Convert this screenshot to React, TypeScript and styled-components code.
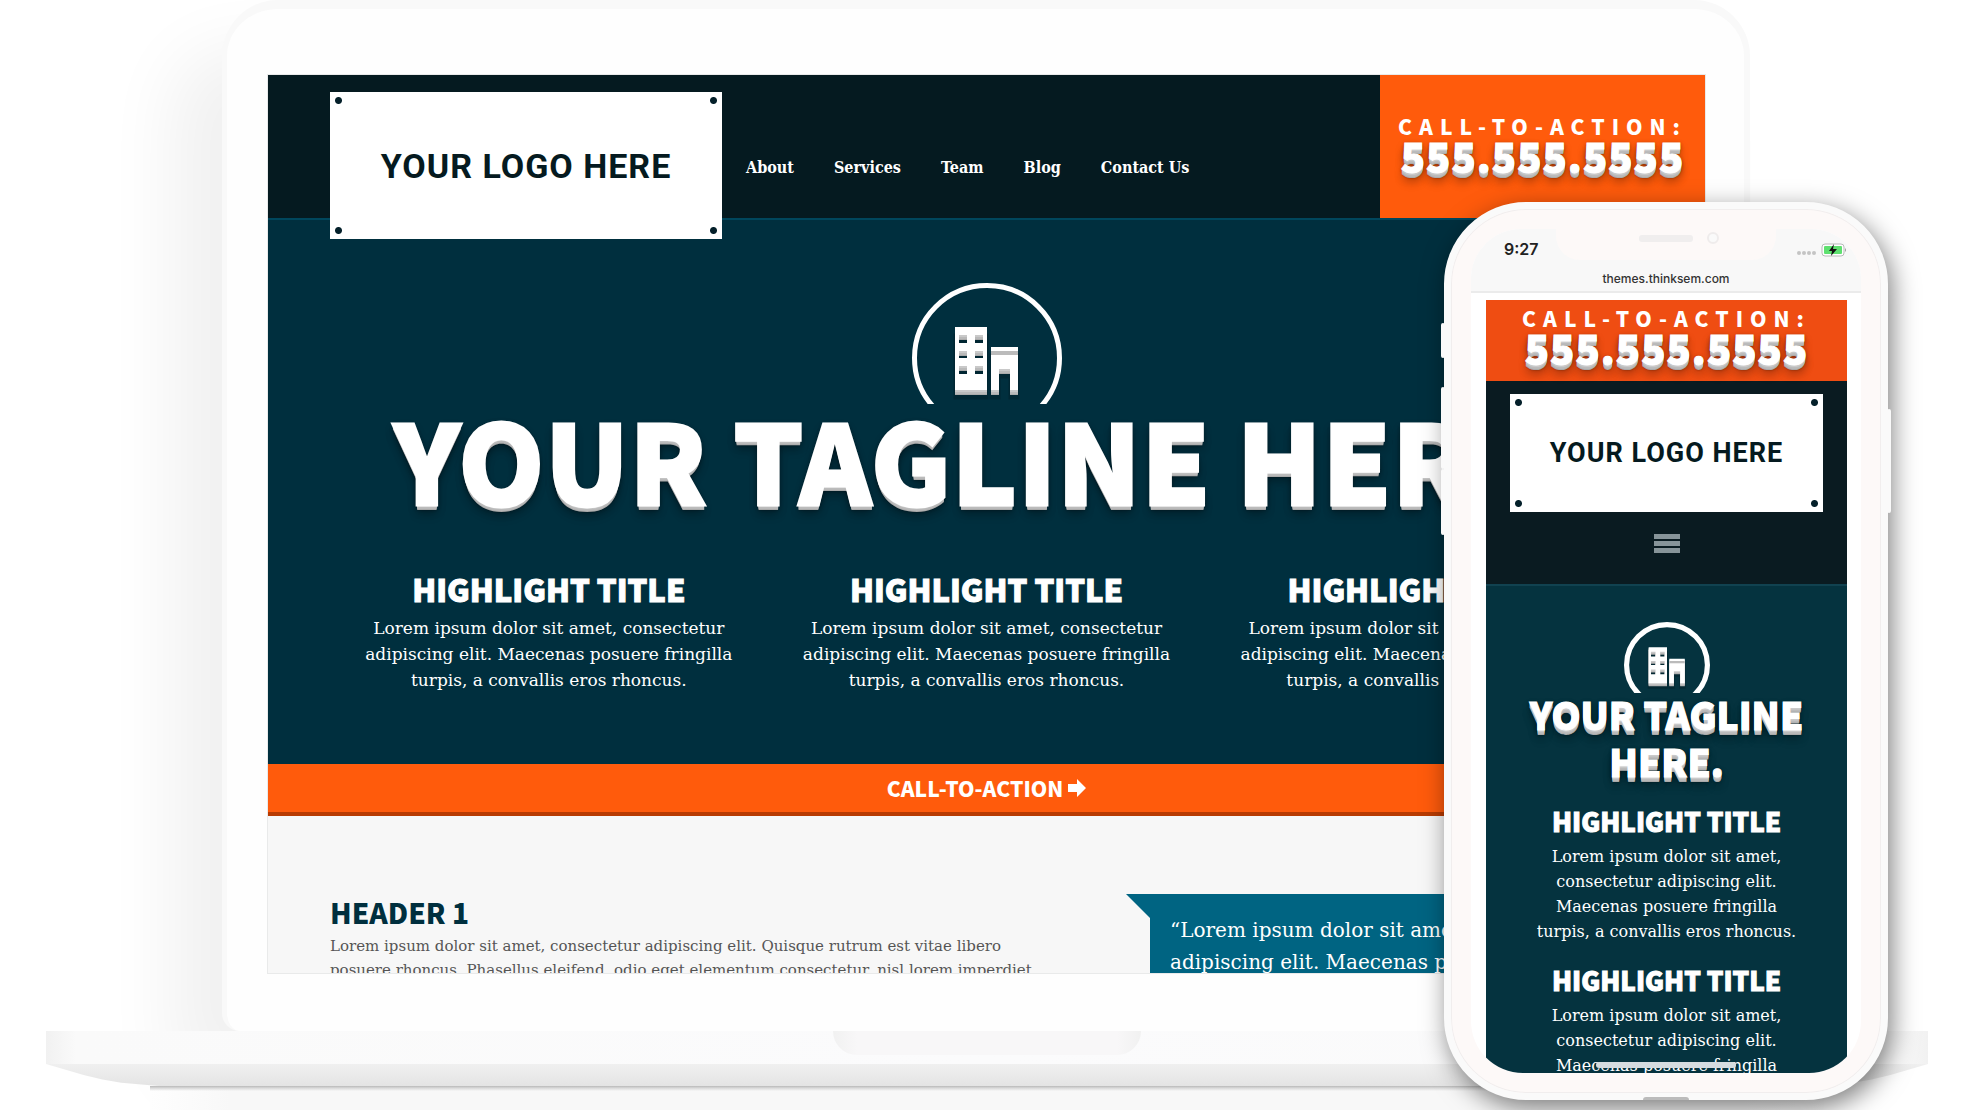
import React from "react";
import styled, { createGlobalStyle, css } from "styled-components";

const display = `"Noto Sans CJK SC", "Noto Sans", sans-serif`;
const slab = `"DejaVu Serif", serif`;
const slabNarrow = `"DejaVu Serif Condensed", "DejaVu Serif", serif`;
const ui = `Inter, Roboto, sans-serif`;

const raised = css`
  text-shadow: 0 1px 0 #ccc, 0 2px 0 #c9c9c9, 0 3px 0 #bbb, 0 4px 0 #b9b9b9,
    0 5px 0 #aaa, 0 6px 1px rgba(0, 0, 0, 0.1), 0 0 5px rgba(0, 0, 0, 0.1),
    0 1px 3px rgba(0, 0, 0, 0.3), 0 3px 5px rgba(0, 0, 0, 0.2),
    0 5px 10px rgba(0, 0, 0, 0.25), 0 10px 10px rgba(0, 0, 0, 0.2);
`;

const Global = createGlobalStyle`
  *, *::before, *::after { box-sizing: border-box; }
  body { margin: 0; background: #fff; overflow: hidden; }
  h1, h2, p, blockquote { margin: 0; }
  a { color: inherit; text-decoration: none; }
`;

const Stage = styled.main`
  position: relative;
  min-height: 100vh;
  overflow: hidden;
`;

/* ---------- laptop ---------- */

const Lid = styled.div`
  margin: 0 224px 0 222px;
  padding: 66px 39px 58px 41px;
  border: solid #f9f9f9;
  border-width: 9px 6px 0 5px;
  border-radius: 56px 56px 18px 18px;
  background: #fefefe;
  box-shadow: -50px 50px 70px 0 rgba(0, 0, 0, 0.06);
`;

const Base = styled.div`
  position: relative;
  margin: 0 46px;
`;

const Deck = styled.div`
  display: flex;
  justify-content: center;
  height: 33px;
  background: linear-gradient(90deg, #f1f1f1, #fafafa 30px, #fbfbfc 50%, #fafafa calc(100% - 30px), #f1f1f1);
`;

const Notch = styled.div`
  width: 308px;
  height: 24px;
  border-radius: 0 0 24px 24px;
  background: linear-gradient(90deg, #f1f1f1, #f8f7f8 24px, #f8f7f8 calc(100% - 24px), #f1f1f1);
`;

const Underside = styled.div`
  position: relative;
  z-index: 1;
  height: 22px;
  background: linear-gradient(#f0f0f0, #e4e4e4);
  clip-path: polygon(0 0, 100% 0, 99% 25%, 98% 50%, 97% 70%, 96% 85%, 94% 100%, 6% 100%, 4% 85%, 3% 70%, 2% 50%, 1% 25%);
`;

const Floor = styled.div`
  height: 24px;
  margin: 0 104px;
  background: linear-gradient(#b9b9b9, #d8d8d8 2px, transparent 5px),
    linear-gradient(90deg, #fefefe, #f8f8f8 80px, #f8f8f8 calc(100% - 80px), #fefefe);
`;

const Screen = styled.div`
  aspect-ratio: 1437 / 898;
  overflow: hidden;
  background: #f7f7f7;
  outline: 1px solid #e9eaea;
`;

/* ---------- shared site parts ---------- */

const Sign = styled.a<{ $small?: boolean }>`
  --dot: radial-gradient(circle, #04202a 3px, transparent 4px);
  display: flex;
  align-items: center;
  justify-content: center;
  flex: none;
  width: ${(p) => (p.$small ? "auto" : "392px")};
  height: ${(p) => (p.$small ? "118px" : "147px")};
  background: var(--dot) left 4px top 4px / 9px 9px no-repeat,
    var(--dot) right 4px top 4px / 9px 9px no-repeat,
    var(--dot) left 4px bottom 4px / 9px 9px no-repeat,
    var(--dot) right 4px bottom 4px / 9px 9px no-repeat, #fff;
  color: #051a20;
  font: 700 ${(p) => (p.$small ? "27px" : "34px")} / 1 Roboto, sans-serif;
  letter-spacing: 1px;
  white-space: nowrap;
`;

const CallLabel = styled.span`
  font: 900 21px/24px ${display};
  letter-spacing: 7px;
  white-space: nowrap;
`;

const CallNumber = styled.span`
  font: 900 40px/34px ${display};
  letter-spacing: 1px;
  white-space: nowrap;
  -webkit-text-stroke: 1px #fff;
  ${raised}
`;

const Call = styled.a<{ $small?: boolean }>`
  display: flex;
  flex-direction: column;
  align-items: center;
  width: ${(p) => (p.$small ? "auto" : "325px")};
  padding: ${(p) => (p.$small ? "6px 0 17px" : "39px 0 0")};
  background: ${(p) => (p.$small ? "#ef4d12" : "#ff5b0c")};
  color: #fff;
`;

const Tagline = styled.h1<{ $small?: boolean }>`
  margin-top: ${(p) => (p.$small ? "-2px" : "0")};
  color: #fff;
  font: 900 ${(p) => (p.$small ? "37px/47px" : "109px/108px")} ${display};
  letter-spacing: ${(p) => (p.$small ? "0" : "1px")};
  text-align: center;
  white-space: nowrap;
  -webkit-text-stroke: ${(p) => (p.$small ? "1px" : "3px")} #fff;
  ${raised}
`;

const HighlightTitle = styled.h2<{ $small?: boolean }>`
  font: 900 ${(p) => (p.$small ? "26px/32px" : "31px/40px")} ${display};
  white-space: nowrap;
  -webkit-text-stroke: 1px #fff;
`;

const HighlightText = styled.p<{ $small?: boolean }>`
  margin-top: ${(p) => (p.$small ? "7px" : "6px")};
  font: ${(p) => (p.$small ? "16px/25px" : "17px/26px")} ${slab};
  white-space: nowrap;
`;

const Highlight = styled.article`
  color: #fff;
  text-align: center;
`;

/* ---------- desktop site ---------- */

const Header = styled.header`
  display: flex;
  height: 145px;
  padding-left: 62px;
  border-bottom: 2px solid #00465c;
  background: #051a20;
`;

const SignSlot = styled.div`
  z-index: 1;
  margin: 17px 0 -21px;
`;

const Nav = styled.nav`
  display: flex;
  flex: 1;
  align-items: center;
  gap: 40px;
  padding: 43px 0 0 24px;
  color: #fff;
  font: 700 16px/20px ${slabNarrow};
  white-space: nowrap;
`;

const Hero = styled.section`
  display: flex;
  flex-direction: column;
  align-items: center;
  padding: 63px 62px 71px;
  background: #002f3e;
`;

const Highlights = styled.div`
  display: grid;
  grid-template-columns: repeat(3, 1fr);
  align-self: stretch;
  margin-top: 57px;
`;

const Banner = styled.a`
  display: flex;
  align-items: center;
  justify-content: center;
  gap: 5px;
  height: 52px;
  border-bottom: 4px solid #b83b02;
  background: #ff5b0c;
  color: #fff;
  font: 900 21px/24px ${display};
`;

const Content = styled.section`
  display: grid;
  grid-template-columns: 1fr 493px;
  gap: 80px;
  padding: 78px 62px 0;
`;

const Heading = styled.h2`
  color: #002f3e;
  font: 900 28px/36px ${display};
`;

const Copy = styled.p`
  margin-top: 4px;
  color: #555;
  font: 15px/24px ${slab};
  white-space: nowrap;
`;

const Quote = styled.blockquote`
  position: relative;
  height: 200px;
  padding: 20px;
  background: #006482;
  color: #fff;
  font: 20px/32px ${slab};
  white-space: nowrap;

  &::before {
    content: "";
    position: absolute;
    top: 0;
    right: 100%;
    width: 24px;
    height: 24px;
    background: #006482;
    clip-path: polygon(0 0, 100% 0, 100% 100%);
  }
`;

/* ---------- phone ---------- */

const Phone = styled.div`
  position: absolute;
  z-index: 2;
  top: 202px;
  right: 86px;
  width: 444px;
  padding: 20px;
  border: 7px solid #fafafa;
  border-radius: 82px;
  background: #fdf9f8;
  box-shadow: inset 0 0 0 1px #f1eeee, 4px 8px 26px rgba(0, 0, 0, 0.5);
`;

const SideKey = styled.i<{ $top: number; $size: number; $right?: boolean }>`
  position: absolute;
  top: ${(p) => p.$top}px;
  ${(p) => (p.$right ? "right" : "left")}: -10px;
  width: 4px;
  height: ${(p) => p.$size}px;
  border-radius: 2px;
  background: #fafafa;
`;

const Port = styled.i`
  position: absolute;
  bottom: -7px;
  left: calc(50% - 23px);
  width: 46px;
  height: 3px;
  border-radius: 3px 3px 0 0;
  background: #bbb;
`;

const PhoneScreen = styled.div`
  position: relative;
  aspect-ratio: 390 / 844;
  overflow: hidden;
  border-radius: 50px 50px 52px 52px;
  background: #fff;
`;

const StatusBar = styled.div`
  display: grid;
  grid-template-columns: 1fr 1fr;
  align-content: start;
  height: 64px;
  padding: 10px 14px 0 33px;
  border-bottom: 2px solid #ebebeb;
  background: #f8f8f8;
`;

const Clock = styled.time`
  color: #222;
  font: 600 16px/20px ${ui};
`;

const Indicators = styled.svg`
  justify-self: end;
  margin-top: 4px;
`;

const Address = styled.span`
  grid-column: 1 / -1;
  margin: 10px 0 0 -19px;
  color: #333;
  font: 500 12px/20px ${ui};
  text-align: center;
`;

const Earpiece = styled.div`
  position: absolute;
  top: 0;
  left: 85px;
  width: 220px;
  height: 31px;
  border-radius: 0 0 24px 24px;
  background: #fdf9f8;
`;

const PhonePage = styled.div`
  margin: 7px 14px 0 15px;
  height: 773px;
  background: #05333f;
`;

const PhoneHeader = styled.header`
  display: flex;
  flex-direction: column;
  height: 205px;
  padding: 13px 24px 0;
  border-bottom: 2px solid #114250;
  background: #0a1b21;
`;

const MenuButton = styled.button`
  align-self: center;
  width: 26px;
  height: 20px;
  margin-top: 22px;
  padding: 0;
  border: 0;
  background: repeating-linear-gradient(#879499 0 5px, transparent 5px 7px);
`;

const PhoneHero = styled.section`
  display: flex;
  flex-direction: column;
  align-items: center;
  padding-top: 36px;
`;

const PhoneHighlights = styled.div`
  display: grid;
  gap: 20px;
  margin-top: 20px;
`;

const HomeBar = styled.i`
  position: absolute;
  bottom: 5px;
  left: calc(50% - 70px);
  width: 140px;
  height: 6px;
  border-radius: 3px;
  background: #d5dce0;
`;

function Emblem({ width, height, stroke }: { width: number; height: number; stroke: number }) {
  const building =
    "M43 44h32v63H43zM47 52v8h8v-8zM63 52v8h8v-8zM47 68v7h8v-7zM63 68v7h8v-7zM47 83v8h8v-8zM63 83v8h8v-8zM79 64h27v43H98V86H87v21h-8z";
  const r = 75 - stroke / 2;
  return (
    <svg width={width} height={height} viewBox={`0 0 150 ${(150 * height) / width}`} aria-hidden="true">
      <circle cx="75" cy="75" r={r} fill="none" stroke="#fff" strokeWidth={stroke} />
      <g fillRule="evenodd">
        <path d={building} transform="translate(0 8)" fill="#000" opacity=".18" stroke="#000" strokeWidth="3" />
        <path d={building} transform="translate(0 5)" fill="#aaa" />
        <path d={building} transform="translate(0 4)" fill="#b9b9b9" />
        <path d={building} transform="translate(0 2)" fill="#c9c9c9" />
        <path d={building} fill="#fff" />
        <path d="M79 68h27v4H79z" fill="#bbb" />
      </g>
    </svg>
  );
}

const links = ["About", "Services", "Team", "Blog", "Contact Us"];

function DesktopSite() {
  return (
    <Screen>
      <Header>
        <SignSlot>
          <Sign href="#">YOUR LOGO HERE</Sign>
        </SignSlot>
        <Nav>
          {links.map((label) => (
            <a key={label} href="#">{label}</a>
          ))}
        </Nav>
        <Call href="#">
          <CallLabel>CALL-TO-ACTION:</CallLabel>
          <CallNumber>555.555.5555</CallNumber>
        </Call>
      </Header>
      <Hero>
        <Emblem width={150} height={121} stroke={5} />
        <Tagline>YOUR TAGLINE HERE.</Tagline>
        <Highlights>
          {[0, 1, 2].map((n) => (
            <Highlight key={n}>
              <HighlightTitle>HIGHLIGHT TITLE</HighlightTitle>
              <HighlightText>
                Lorem ipsum dolor sit amet, consectetur<br />
                adipiscing elit. Maecenas posuere fringilla<br />
                turpis, a convallis eros rhoncus.
              </HighlightText>
            </Highlight>
          ))}
        </Highlights>
      </Hero>
      <Banner href="#">
        CALL-TO-ACTION
        <svg width="18" height="18" viewBox="0 0 18 18" aria-hidden="true">
          <path d="M0 5h9V0l9 9-9 9v-5H0z" fill="#fff" />
        </svg>
      </Banner>
      <Content>
        <div>
          <Heading>HEADER 1</Heading>
          <Copy>
            Lorem ipsum dolor sit amet, consectetur adipiscing elit. Quisque rutrum est vitae libero<br />
            posuere rhoncus. Phasellus eleifend, odio eget elementum consectetur, nisl lorem imperdiet
          </Copy>
        </div>
        <Quote>
          “Lorem ipsum dolor sit amet,<br />
          adipiscing elit. Maecenas posuere
        </Quote>
      </Content>
    </Screen>
  );
}

function MobileSite() {
  return (
    <Phone>
      <SideKey $top={114} $size={35} />
      <SideKey $top={178} $size={82} />
      <SideKey $top={260} $size={66} />
      <SideKey $top={200} $size={104} $right />
      <PhoneScreen>
        <StatusBar>
          <Clock>9:27</Clock>
          <Indicators width="50" height="14" viewBox="0 0 50 14" aria-hidden="true">
            <g fill="#c4c4c4">
              <circle cx="2" cy="10" r="2" />
              <circle cx="7" cy="10" r="2" />
              <circle cx="12" cy="10" r="2" />
              <circle cx="17" cy="10" r="2" />
            </g>
            <rect x="25" y="1" width="22" height="12" rx="3" fill="#fff" stroke="#b9b9b9" />
            <rect x="27" y="3" width="18" height="8" rx="1" fill="#5fe070" />
            <path d="M48 5q2 2 0 4z" fill="#999" />
            <path d="M37 1l-5 7h3l-1 5 6-7h-4z" fill="#111" />
          </Indicators>
          <Address>themes.thinksem.com</Address>
        </StatusBar>
        <PhonePage>
          <Call href="#" $small>
            <CallLabel>CALL-TO-ACTION:</CallLabel>
            <CallNumber>555.555.5555</CallNumber>
          </Call>
          <PhoneHeader>
            <Sign href="#" $small>YOUR LOGO HERE</Sign>
            <MenuButton aria-label="Menu" />
          </PhoneHeader>
          <PhoneHero>
            <Emblem width={86} height={71} stroke={9} />
            <Tagline as="h2" $small>
              YOUR TAGLINE<br />HERE.
            </Tagline>
            <PhoneHighlights>
              {[0, 1].map((n) => (
                <Highlight key={n}>
                  <HighlightTitle $small>HIGHLIGHT TITLE</HighlightTitle>
                  <HighlightText $small>
                    Lorem ipsum dolor sit amet,<br />
                    consectetur adipiscing elit.<br />
                    Maecenas posuere fringilla<br />
                    {n === 0 && "turpis, a convallis eros rhoncus."}
                  </HighlightText>
                </Highlight>
              ))}
            </PhoneHighlights>
          </PhoneHero>
        </PhonePage>
        <Earpiece>
          <svg width="220" height="31" aria-hidden="true">
            <rect x="83" y="6" width="54" height="7" rx="3" fill="#f0eeee" />
            <circle cx="157" cy="9" r="5" fill="#fafafa" stroke="#efecec" strokeWidth="2" />
          </svg>
        </Earpiece>
        <HomeBar />
      </PhoneScreen>
      <Port />
    </Phone>
  );
}

export default function App() {
  return (
    <>
      <Global />
      <Stage>
        <Lid>
          <DesktopSite />
        </Lid>
        <Base>
          <Deck>
            <Notch />
          </Deck>
          <Underside />
          <Floor />
        </Base>
        <MobileSite />
      </Stage>
    </>
  );
}
